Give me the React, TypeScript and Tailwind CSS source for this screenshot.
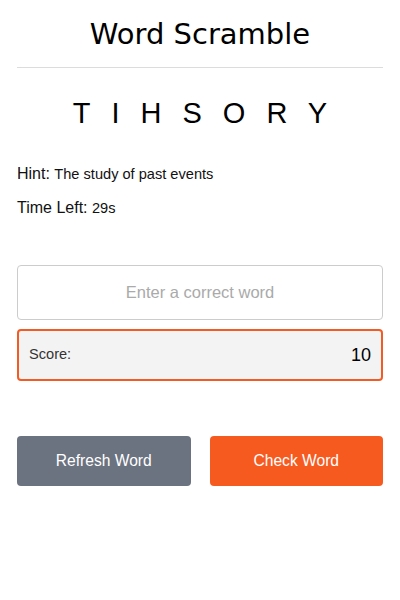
import React from "react";

export default function App() {
  return (
    <div className="w-[400px] h-[600px] bg-white px-[17px] pt-[14px]" style={{ fontFamily: '"Liberation Sans", Arial, sans-serif' }}>
      <h1 className="text-center text-[29px] leading-[40px] text-black" style={{ fontFamily: '"DejaVu Sans", sans-serif' }}>Word Scramble</h1>
      <div className="mt-[13px] h-px bg-[#dcdcdc]" />
      <div className="mt-[27px] text-center text-[29px] leading-[36px] tracking-[21px] pl-[21px] text-black">TIHSORY</div>
      <div className="mt-[33px] text-[16px] leading-[20px] text-[#111]">
        Hint: <span className="text-[14.6px]">The study of past events</span>
      </div>
      <div className="mt-[14px] text-[16px] leading-[20px] text-[#111]">
        Time Left: <span className="text-[14.6px]">29s</span>
      </div>
      <input
        className="mt-[47px] block w-full h-[55px] rounded-[4px] border border-[#ccc] text-center text-[16.5px] text-black placeholder:text-[#aaa] outline-none"
        placeholder="Enter a correct word"
      />
      <div className="mt-[9px] flex h-[52px] items-center justify-between rounded-[4px] border-2 border-[#f35b25] bg-[#f3f3f3] px-[10px]">
        <span className="text-[14.6px] text-[#333]">Score:</span>
        <span className="text-[18px] text-black">10</span>
      </div>
      <div className="mt-[55px] flex gap-[19px]">
        <button className="flex-1 h-[50px] rounded-[4px] bg-[#6b7280] text-white text-[15.6px]">Refresh Word</button>
        <button className="flex-1 h-[50px] rounded-[4px] bg-[#f75a1f] text-white text-[15.6px]">Check Word</button>
      </div>
    </div>
  );
}
